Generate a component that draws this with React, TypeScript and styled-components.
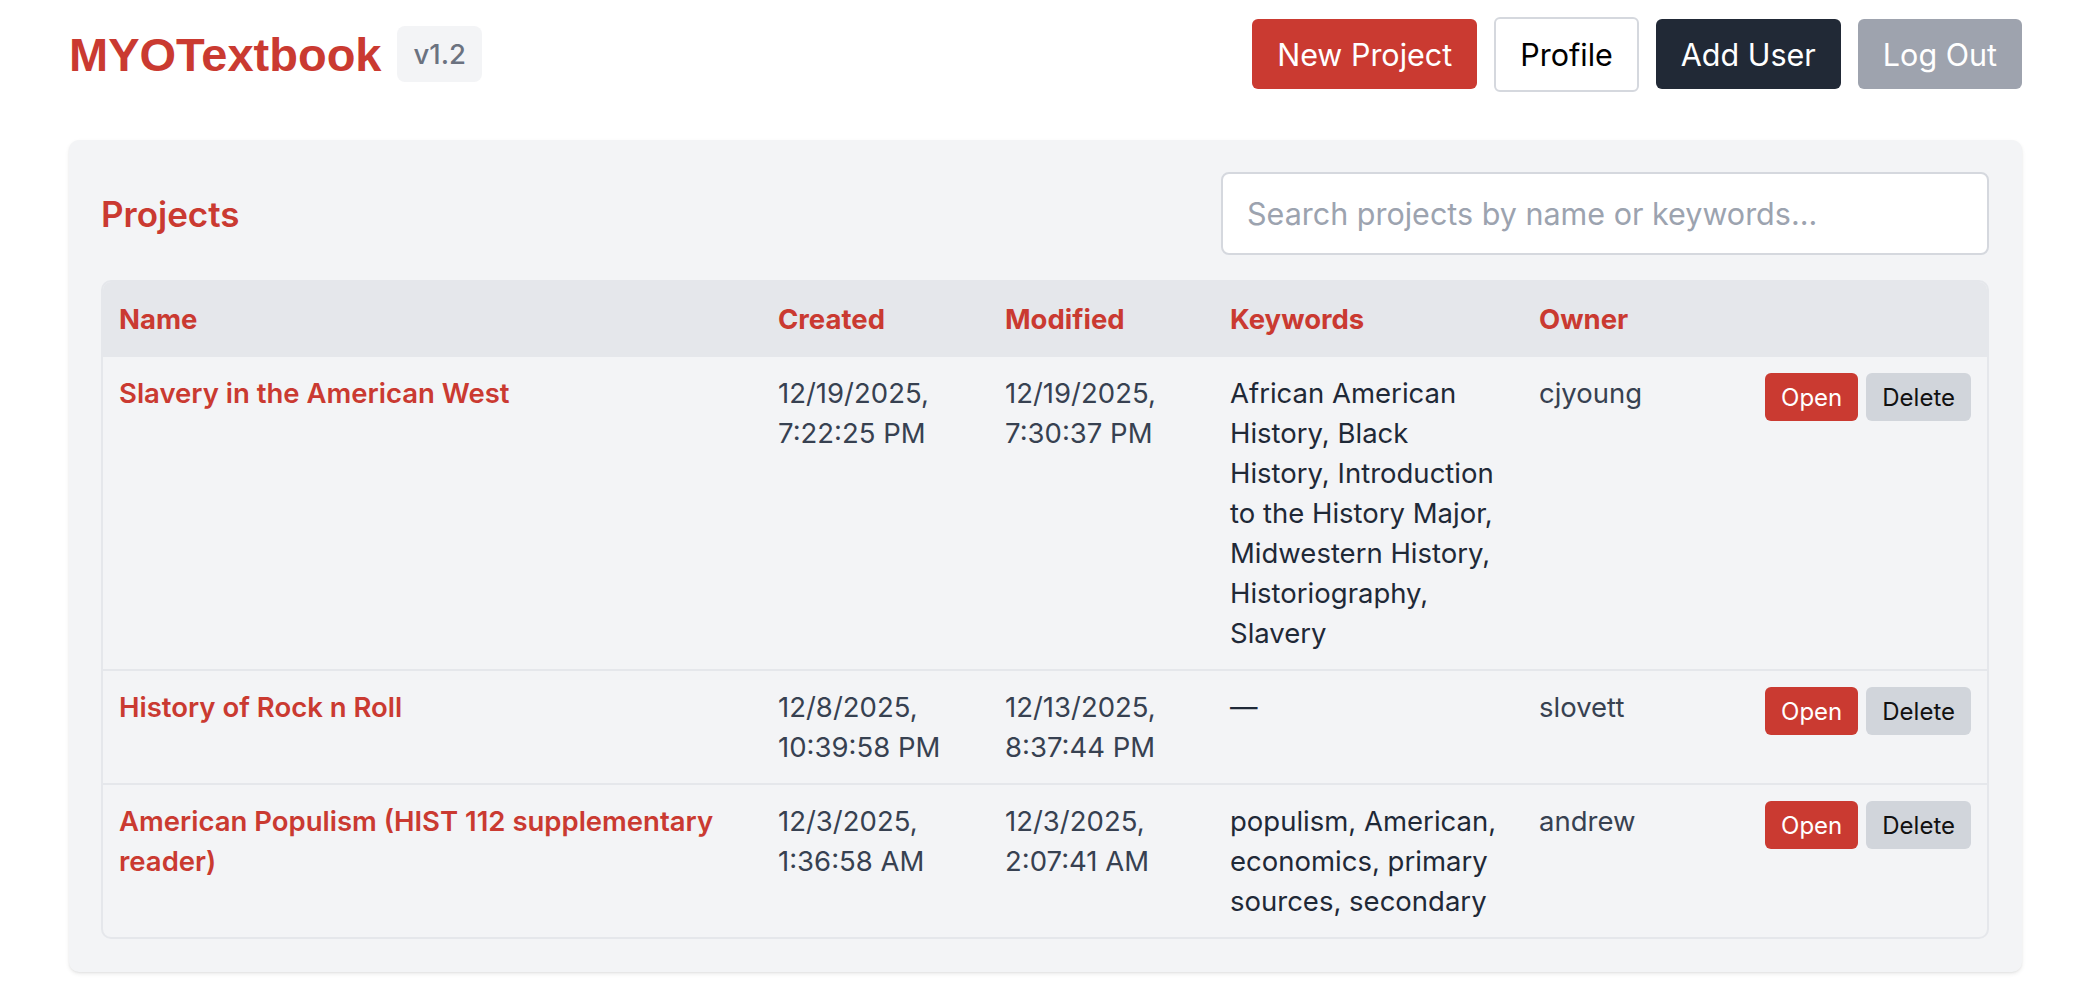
import React from "react";
import styled, { createGlobalStyle } from "styled-components";

const RED = "#ca3a31";

const Global = createGlobalStyle`
  * { box-sizing: border-box; }
  body {
    margin: 0;
    background: #ffffff;
    font-family: Inter, "Noto Sans", "Liberation Sans", sans-serif;
    color: #1f2937;
  }
`;

const Page = styled.div`
  padding: 16px 68px 32px 69px;
`;

const Header = styled.header`
  display: flex;
  align-items: center;
  justify-content: space-between;
  height: 76px;
`;

const Brand = styled.div`
  display: flex;
  align-items: center;
  gap: 16px;
`;

const Title = styled.h1`
  margin: 0;
  font-family: "Liberation Sans", Arial, sans-serif;
  font-weight: 700;
  font-size: 47px;
  color: ${RED};
`;

const Badge = styled.span`
  display: inline-flex;
  align-items: center;
  height: 56px;
  padding: 0 16px;
  border-radius: 8px;
  background: #f3f4f6;
  color: #6b7280;
  font-size: 27.5px;
  font-weight: 500;
`;

const Actions = styled.nav`
  display: flex;
  align-items: center;
  gap: 17px;
`;

type Variant = "red" | "outline" | "dark" | "muted";

const bg: Record<Variant, string> = {
  red: RED,
  outline: "#ffffff",
  dark: "#212936",
  muted: "#9ea3ae",
};

const HeaderButton = styled.button<{ $variant: Variant }>`
  height: ${(p) => (p.$variant === "outline" ? "75px" : "70px")};
  padding: 0 ${(p) => (p.$variant === "outline" ? "24px" : "25px")};
  border-radius: 6px;
  border: ${(p) => (p.$variant === "outline" ? "2px solid #d5d8de" : "none")};
  background: ${(p) => bg[p.$variant]};
  color: ${(p) => (p.$variant === "outline" ? "#000000" : "#ffffff")};
  font-family: Inter, "Noto Sans", sans-serif;
  font-size: 30.5px;
  font-weight: 400;
  cursor: pointer;
`;

const Panel = styled.section`
  margin-top: 48px;
  background: #f3f4f6;
  border-radius: 10px;
  padding: 32px 33px 33px 32px;
  box-shadow: 0 2px 4px rgba(0, 0, 0, 0.08), 0 1px 2px rgba(0, 0, 0, 0.05);
`;

const PanelHead = styled.div`
  display: flex;
  align-items: center;
  justify-content: space-between;
  margin-bottom: 25px;
`;

const PanelTitle = styled.h2`
  margin: 0;
  font-size: 35px;
  font-weight: 600;
  color: ${RED};
`;

const Search = styled.input`
  width: 768px;
  height: 83px;
  border: 2px solid #d5d8de;
  border-radius: 8px;
  background: #ffffff;
  padding: 0 24px;
  font-family: Inter, "Noto Sans", sans-serif;
  font-size: 30.5px;
  color: #1f2937;
  outline: none;
  &::placeholder {
    color: #9ca3af;
  }
`;

const Table = styled.table`
  width: 100%;
  table-layout: fixed;
  border-collapse: separate;
  border-spacing: 0;
  border: 2px solid #e5e7eb;
  border-radius: 10px;
  overflow: hidden;
`;

const Th = styled.th`
  background: #e5e7eb;
  color: ${RED};
  text-align: left;
  font-size: 27.5px;
  font-weight: 700;
  line-height: 40px;
  padding: 17px 16px 16px;
`;

type Tone = "link" | "date" | "keywords" | "owner" | "actions";

const toneColor: Record<Tone, string> = {
  link: RED,
  date: "#374151",
  keywords: "#1f2937",
  owner: "#374151",
  actions: "#374151",
};

const Td = styled.td<{ $tone: Tone }>`
  vertical-align: top;
  padding: 16px 16px;
  border-top: 2px solid #e5e7eb;
  font-size: 27.5px;
  line-height: 40px;
  color: ${(p) => toneColor[p.$tone]};
  font-weight: ${(p) => (p.$tone === "link" ? 600 : 400)};
  text-align: ${(p) => (p.$tone === "actions" ? "right" : "left")};
`;

const RowButtons = styled.div`
  display: flex;
  justify-content: flex-end;
  gap: 8px;
`;

const SmallButton = styled.button<{ $danger?: boolean }>`
  height: 48px;
  padding: 0 16px;
  border: none;
  border-radius: 6px;
  background: ${(p) => (p.$danger ? "#d1d5db" : RED)};
  color: ${(p) => (p.$danger ? "#111111" : "#ffffff")};
  font-family: Inter, "Noto Sans", sans-serif;
  font-size: 24px;
  font-weight: 400;
  cursor: pointer;
`;

const projects = [
  {
    name: "Slavery in the American West",
    created: "12/19/2025, 7:22:25 PM",
    modified: "12/19/2025, 7:30:37 PM",
    keywords:
      "African American History, Black History, Introduction to the History Major, Midwestern History, Historiography, Slavery",
    owner: "cjyoung",
  },
  {
    name: "History of Rock n Roll",
    created: "12/8/2025, 10:39:58 PM",
    modified: "12/13/2025, 8:37:44 PM",
    keywords: "—",
    owner: "slovett",
  },
  {
    name: "American Populism (HIST 112 supplementary reader)",
    created: "12/3/2025, 1:36:58 AM",
    modified: "12/3/2025, 2:07:41 AM",
    keywords: "populism, American, economics, primary sources, secondary",
    owner: "andrew",
  },
];

export default function App() {
  return (
    <Page>
      <Global />
      <Header>
        <Brand>
          <Title>MYOTextbook</Title>
          <Badge>v1.2</Badge>
        </Brand>
        <Actions>
          <HeaderButton $variant="red">New Project</HeaderButton>
          <HeaderButton $variant="outline">Profile</HeaderButton>
          <HeaderButton $variant="dark">Add User</HeaderButton>
          <HeaderButton $variant="muted">Log Out</HeaderButton>
        </Actions>
      </Header>
      <Panel>
        <PanelHead>
          <PanelTitle>Projects</PanelTitle>
          <Search placeholder="Search projects by name or keywords..." />
        </PanelHead>
        <Table>
          <colgroup>
            <col style={{ width: 659 }} />
            <col style={{ width: 227 }} />
            <col style={{ width: 225 }} />
            <col style={{ width: 309 }} />
            <col style={{ width: 226 }} />
            <col />
          </colgroup>
          <thead>
            <tr>
              <Th>Name</Th>
              <Th>Created</Th>
              <Th>Modified</Th>
              <Th>Keywords</Th>
              <Th>Owner</Th>
              <Th></Th>
            </tr>
          </thead>
          <tbody>
            {projects.map((p) => (
              <tr key={p.name}>
                <Td $tone="link">{p.name}</Td>
                <Td $tone="date">{p.created}</Td>
                <Td $tone="date">{p.modified}</Td>
                <Td $tone="keywords">{p.keywords}</Td>
                <Td $tone="owner">{p.owner}</Td>
                <Td $tone="actions">
                  <RowButtons>
                    <SmallButton>Open</SmallButton>
                    <SmallButton $danger>Delete</SmallButton>
                  </RowButtons>
                </Td>
              </tr>
            ))}
          </tbody>
        </Table>
      </Panel>
    </Page>
  );
}
